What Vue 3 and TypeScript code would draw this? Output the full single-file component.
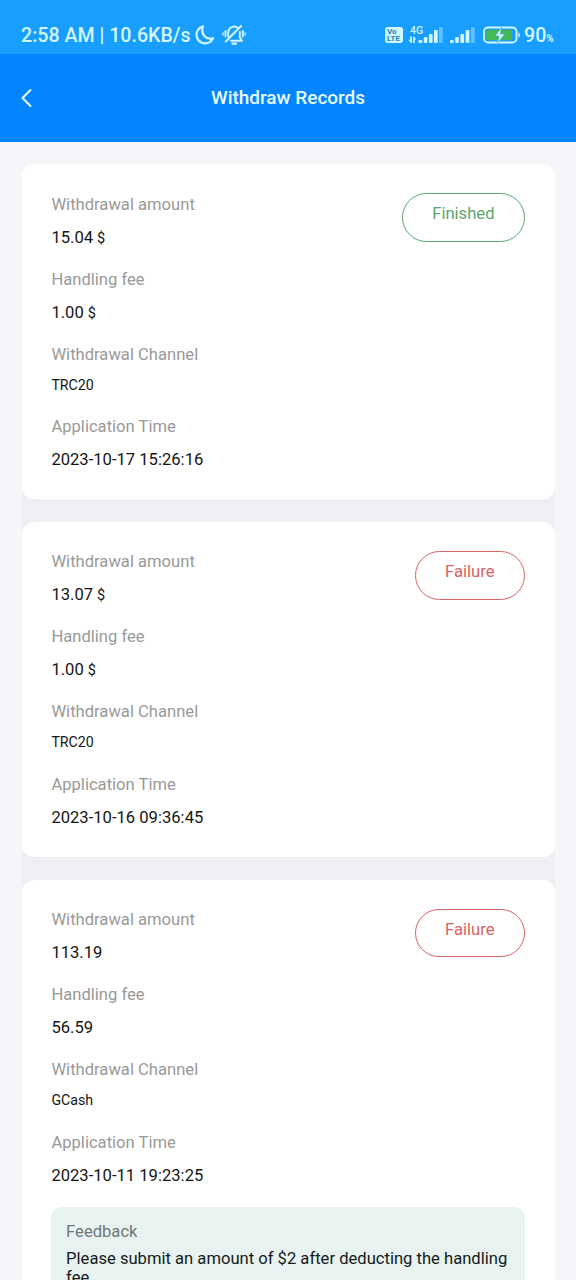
<script setup lang="ts">
interface Field {
  label: string
  value: string
  unit?: string
  small?: boolean
}
interface WithdrawRecord {
  status: 'Finished' | 'Failure'
  fields: Field[]
  feedback?: string
}

function makeFields(amount: string, fee: string, channel: string, time: string, unit?: string): Field[] {
  return [
    { label: 'Withdrawal amount', value: amount, unit },
    { label: 'Handling fee', value: fee, unit },
    { label: 'Withdrawal Channel', value: channel, small: true },
    { label: 'Application Time', value: time },
  ]
}

const records: WithdrawRecord[] = [
  { status: 'Finished', fields: makeFields('15.04', '1.00', 'TRC20', '2023-10-17 15:26:16', '$') },
  { status: 'Failure', fields: makeFields('13.07', '1.00', 'TRC20', '2023-10-16 09:36:45', '$') },
  {
    status: 'Failure',
    fields: makeFields('113.19', '56.59', 'GCash', '2023-10-11 19:23:25'),
    feedback: 'Please submit an amount of $2 after deducting the handling fee',
  },
]
</script>

<template>
  <div class="screen">
    <div class="status-bar">
      <span class="clock">2:58 AM | 10.6KB/s</span>
      <svg class="moon" width="20" height="20" viewBox="0 0 20 20">
        <path d="M8 1.4C1.5 3.2-.3 10.800 3.500 15.300C7.800 20.200 15.700 19 18 13.200C11.200 15.300 5.200 9.300 8 1.400Z" fill="none" stroke="currentColor" stroke-width="2.200" stroke-linejoin="round" />
      </svg>
      <svg class="bell" width="24" height="22" viewBox="0 0 24 22">
        <g fill="none" stroke="currentColor" stroke-width="1.900" stroke-linecap="round" stroke-linejoin="round">
          <path d="M6.200 12.500V8.500a5.800 5.800 0 0 1 9.300-4.700M17.800 8v5.500l2.200 3.200H9" />
          <path d="M19 2L3.800 17.500" stroke-width="2.100" />
          <path d="M3.500 7v5.500M20.800 7v5.500" />
          <path d="M1 9v2M23.200 9v2" stroke-width="1.400" />
          <path d="M10.500 19.700h3.500" stroke-width="2.200" />
        </g>
      </svg>
      <div class="spacer" />
      <span class="volte"><span>Vo</span><span>LTE</span></span>
      <svg class="signal" width="36" height="20" viewBox="0 0 36 20">
        <text x="2" y="8.500" class="net">4G</text>
        <g fill="currentColor">
          <path d="M2.200 11.500v3.200H.500l2.400 3.300h1V11.500zM5 18v-6.500h1l2.300 3.100H6.700V18z" />
          <rect x="10.500" y="15" width="3.700" height="3" rx="1" />
          <rect x="15.700" y="12" width="3.700" height="6" rx="1" />
          <rect x="20.900" y="9" width="3.700" height="9" rx="1" />
          <rect x="26" y="5" width="3.700" height="13" rx="1" />
          <rect x="31" y="2" width="3.700" height="16" rx="1" opacity=".4" />
        </g>
      </svg>
      <svg class="signal second" width="26" height="20" viewBox="0 0 26 20">
        <g fill="currentColor">
          <rect x="0" y="15" width="3.700" height="3" rx="1" />
          <rect x="5.200" y="12" width="3.700" height="6" rx="1" />
          <rect x="10.400" y="9" width="3.700" height="9" rx="1" />
          <rect x="15.700" y="5" width="3.700" height="13" rx="1" />
          <rect x="21" y="2" width="3.700" height="16" rx="1" opacity=".4" />
        </g>
      </svg>
      <svg class="battery" width="38" height="18" viewBox="0 0 38 18">
        <rect x="1" y="1.500" width="32.500" height="15" rx="4" fill="none" stroke="currentColor" stroke-width="1.800" />
        <rect x="3.200" y="3.700" width="25.500" height="10.600" rx="2" fill="#43b957" />
        <path d="M35.300 6.500q1.700.5 1.700 2.500t-1.700 2.500z" fill="currentColor" />
        <path d="M18.500 1.500L12 10h4L14.500 17L22 8h-4.500z" fill="currentColor" stroke="#2fa0c8" stroke-width=".6" />
      </svg>
      <span class="percent">90<small>%</small></span>
    </div>

    <header class="nav">
      <svg class="back" width="14" height="20" viewBox="0 0 14 20">
        <path d="M10.500 2L2.500 10l8 8" fill="none" stroke="currentColor" stroke-width="2" stroke-linecap="round" stroke-linejoin="round" />
      </svg>
      <h1>Withdraw Records</h1>
    </header>

    <main class="list">
      <div v-for="(record, i) in records" :key="i" class="slot">
        <article class="card">
          <span class="badge" :class="record.status.toLowerCase()">{{ record.status }}</span>
          <dl>
            <div v-for="field in record.fields" :key="field.label" class="field">
              <dt>{{ field.label }}</dt>
              <dd :class="{ small: field.small }">{{ field.value }}<span v-if="field.unit" class="unit">{{ field.unit }}</span></dd>
            </div>
          </dl>
          <section v-if="record.feedback" class="feedback">
            <h2>Feedback</h2>
            <p>{{ record.feedback }}</p>
          </section>
        </article>
      </div>
    </main>
  </div>
</template>

<style>
body {
  margin: 0;
}
</style>

<style scoped>
.screen {
  height: 1280px;
  overflow: hidden;
  display: flex;
  flex-direction: column;
  background: #f4f6fa;
  font-family: Roboto, 'Liberation Sans', sans-serif;
  font-size: 16.600px;
}
.status-bar {
  flex: none;
  box-sizing: border-box;
  height: 54px;
  padding: 17px 22px 0 21px;
  display: flex;
  align-items: center;
  background: #189eff;
  color: #d2f8ff;
}
.clock {
  width: 172px;
  font-size: 19.600px;
  font-weight: 500;
  white-space: nowrap;
}
.moon {
  margin-left: 1.500px;
  margin-top: -1px;
}
.bell {
  margin-left: 7px;
  margin-top: -1px;
}
.spacer {
  flex: 1;
}
.volte {
  width: 18px;
  height: 16px;
  margin-top: -1px;
  margin-right: 5px;
  border-radius: 3px;
  display: flex;
  flex-direction: column;
  justify-content: center;
  background: currentColor;
  font-size: 8px;
  font-weight: 700;
  line-height: 7px;
}
.volte span {
  padding-left: 2px;
  color: #1b83b8;
}
.net {
  font-size: 10.500px;
  font-weight: 500;
  fill: currentColor;
}
.signal {
  margin-top: -1px;
}
.second {
  margin-left: 6px;
}
.battery {
  margin-left: 7px;
  margin-top: -2px;
}
.percent {
  width: 30px;
  margin-left: 3px;
  font-size: 19.600px;
  font-weight: 500;
  white-space: nowrap;
}
.percent small {
  font-size: 10px;
  font-weight: 700;
}
.nav {
  flex: none;
  box-sizing: border-box;
  height: 88px;
  padding-bottom: 1px;
  display: grid;
  grid-template-columns: 80px 1fr 80px;
  align-items: center;
  background: #0285fe;
  color: #e9fcff;
}
.back {
  margin-left: 20px;
}
h1 {
  margin: 0;
  text-align: center;
  font-size: 18.950px;
  font-weight: 500;
}
.list {
  padding: 22px 21px 0 22px;
}
.slot {
  padding-bottom: 22.800px;
  background: linear-gradient(#f4f6fa 60px, #eeeff3 60px);
}
.card {
  position: relative;
  box-sizing: border-box;
  min-height: 335px;
  padding: 30.500px 30px 28px 29.400px;
  border-radius: 12px;
  background: #fff;
}
.slot + .slot {
  background: #eeeff3;
}
.badge {
  position: absolute;
  top: 29.400px;
  right: 30px;
  box-sizing: border-box;
  height: 48.500px;
  padding: 0 29.500px;
  border: 1px solid;
  border-radius: 24.500px;
  line-height: 40px;
}
.finished {
  color: #5ba56f;
}
.failure {
  color: #d96363;
}
dl {
  margin: 0;
  display: flex;
  flex-direction: column;
  gap: 22px;
}
dt {
  height: 20px;
  line-height: 20px;
  color: #999;
}
dd {
  margin: 13px 0 0;
  height: 20px;
  line-height: 20px;
  color: #151515;
}
.unit {
  margin-left: 4px;
  font-size: 14.500px;
}
dd.small {
  margin-top: 11.200px;
  height: 19.300px;
  line-height: 18px;
  font-size: 14.200px;
}
.feedback {
  margin-top: 21.500px;
  padding: 14px 14px 14px 14.700px;
  border-radius: 10px;
  background: #e8f3f1;
}
h2 {
  margin: 0;
  font-size: 16.600px;
  font-weight: 400;
  line-height: 22px;
  color: #6f7776;
}
p {
  margin: 5.500px 0 0;
  line-height: 19.500px;
  color: #151a19;
}
</style>
